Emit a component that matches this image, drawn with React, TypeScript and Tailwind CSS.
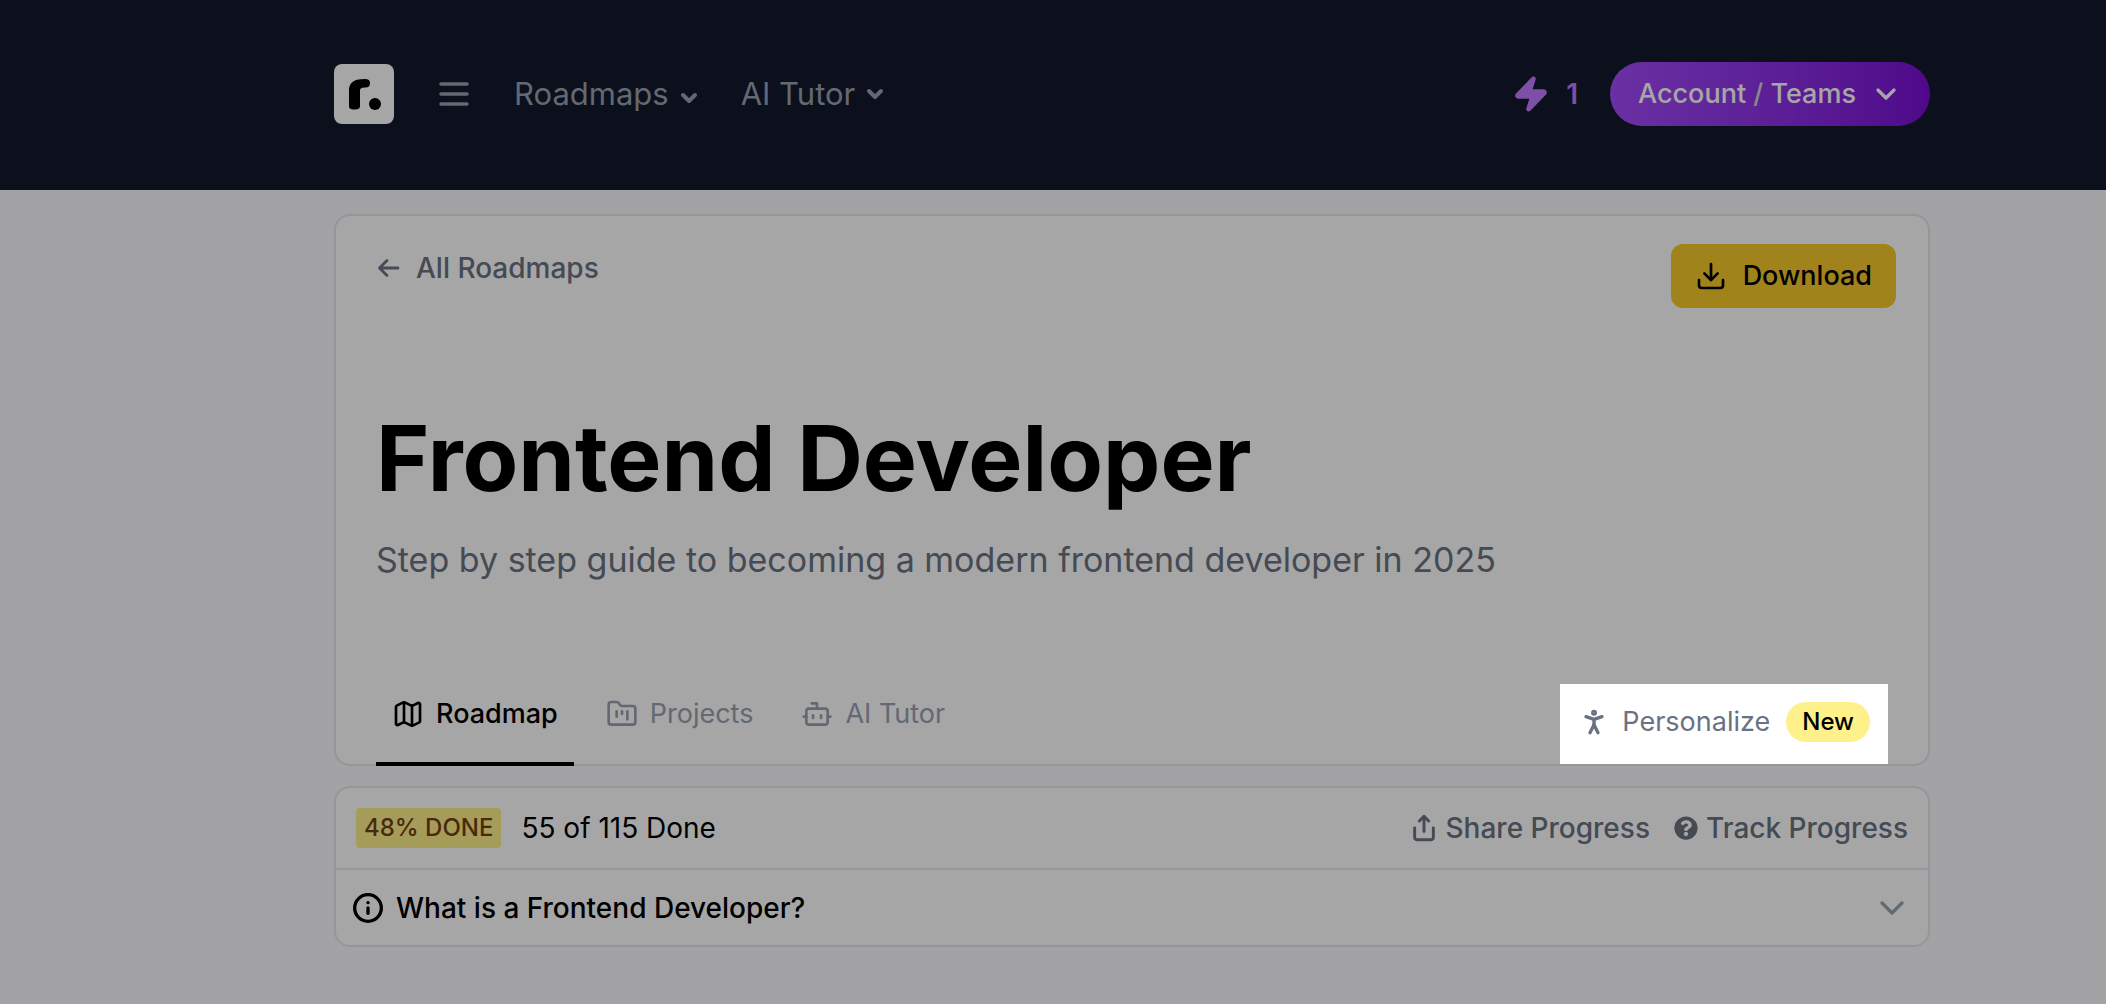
import React from 'react';
import {
  Bot,
  ChevronDown,
  Download,
  FolderKanban,
  Info,
  Map as MapIcon,
  PersonStanding,
  Share,
  Zap,
} from 'lucide-react';
import type { LucideIcon } from 'lucide-react';
import { FaQuestionCircle } from 'react-icons/fa';

const Logo: React.FC = () => (
  <svg viewBox="0 0 60 60" className="h-15 w-15" aria-hidden="true">
    <rect width="60" height="60" rx="8" fill="#fff" />
    <path
      d="M15 42V26C15 18 21 15 31 15C34.500 15 36 16.500 36 19C36 22 34.500 23.500 31.500 23.500C28 23.500 26 24 26 27V42C26 44.500 24.500 45.500 20.500 45.500C16.500 45.500 15 44.500 15 42Z"
      fill="#000"
    />
    <circle cx="41" cy="40" r="6" fill="#000" />
  </svg>
);

const MenuIcon: React.FC = () => (
  <svg viewBox="0 0 30 24" className="h-6 w-[30px]" fill="none" stroke="currentColor" strokeWidth="3.500" strokeLinecap="round">
    <path d="M2 2H28M2 12H28M2 22H28" />
  </svg>
);

const BackIcon: React.FC = () => (
  <svg viewBox="0 0 24 20" className="h-5 w-6" fill="none" stroke="currentColor" strokeWidth="2.800" strokeLinecap="round" strokeLinejoin="round">
    <path d="M22 10H3.500M11 2.500L3.500 10L11 17.500" />
  </svg>
);

interface TabProps {
  icon: LucideIcon;
  label: string;
  isActive?: boolean;
}

const Tab: React.FC<TabProps> = ({ icon: Icon, label, isActive }) => (
  <button
    type="button"
    className={`-mb-0.5 flex items-center gap-3 border-b-4 px-4 pb-7 text-[27px] leading-10 ${
      isActive ? 'border-black font-medium text-black' : 'border-transparent text-gray-400'
    }`}
  >
    <Icon className="h-8 w-8" />
    {label}
  </button>
);

const Header: React.FC = () => (
  <header className="bg-[#121a2b] pt-[62px] pr-[176px] pb-16 pl-[334px]">
    <div className="flex h-16 items-center justify-between">
      <nav className="flex items-center text-gray-400">
        <a href="#home" aria-label="Home">
          <Logo />
        </a>
        <button type="button" aria-label="Menu" className="ml-[45px]">
          <MenuIcon />
        </button>
        <button type="button" className="ml-[45px] flex items-center gap-2 text-[31px] leading-10">
          Roadmaps
          <ChevronDown className="mt-2 h-6 w-6" strokeWidth={4} />
        </button>
        <button type="button" className="ml-10 flex items-center gap-2 text-[31px] leading-10">
          AI Tutor
          <ChevronDown className="h-6 w-6" strokeWidth={4} />
        </button>
      </nav>

      <div className="flex items-center gap-8">
        <button type="button" className="flex items-center gap-4 text-[28px] font-semibold text-purple-400">
          <Zap className="h-[38px] w-[38px] fill-current" />
          1
        </button>
        <button
          type="button"
          className="flex h-16 w-80 items-center justify-between rounded-full bg-linear-to-r from-[#a44afc] to-[#7a0cd4] px-7 text-[27px] font-medium text-white"
        >
          <span>
            Account <span className="text-gray-300">/</span> Teams
          </span>
          <ChevronDown className="h-8 w-8" strokeWidth={2.5} />
        </button>
      </div>
    </div>
  </header>
);

// The spotlight's shadow dims everything on the page except the button itself
const PersonalizeButton: React.FC = () => (
  <button
    type="button"
    className="relative z-10 mr-2 flex h-20 items-center bg-white pr-[18px] pb-1 pl-[18px] text-[27px] text-gray-500 shadow-[0_0_0_4000px_rgba(0,0,0,0.35)]"
  >
    <PersonStanding className="h-8 w-8" strokeWidth={2.5} />
    <span className="ml-3">Personalize</span>
    <span className="ml-4 flex h-10 items-center rounded-full bg-[#fef08a] px-4 text-2xl font-medium text-black">
      New
    </span>
  </button>
);

const RoadmapHeader: React.FC = () => (
  <section className="rounded-2xl border-2 border-gray-200 bg-white pt-7 pr-8 pl-10">
    <div className="flex items-start justify-between">
      <a href="#roadmaps" className="mt-1 flex items-center gap-4 text-[28px] leading-10 font-medium text-gray-500">
        <BackIcon />
        All Roadmaps
      </a>
      <button
        type="button"
        className="flex h-16 items-center gap-4 rounded-xl bg-[#f8ca2a] px-6 text-[27px] font-medium text-black"
      >
        <Download className="h-8 w-8" />
        Download
      </button>
    </div>

    <h1 className="mt-[102px] text-[91px] leading-24 font-bold text-black">Frontend Developer</h1>
    <p className="mt-[34px] text-[34px] leading-10 text-gray-500">
      Step by step guide to becoming a modern frontend developer in 2025
    </p>

    <div className="mt-26 flex items-end justify-between">
      <div className="flex gap-4">
        <Tab icon={MapIcon} label="Roadmap" isActive />
        <Tab icon={FolderKanban} label="Projects" />
        <Tab icon={Bot} label="AI Tutor" />
      </div>
      <PersonalizeButton />
    </div>
  </section>
);

const ProgressPanel: React.FC = () => (
  <section className="mt-5 rounded-2xl border-2 border-gray-200 bg-white">
    <div className="flex h-[82px] items-center justify-between border-b-2 border-gray-200 px-5 text-[28px]">
      <p className="flex items-center gap-5 text-black">
        <span className="flex h-10 items-center rounded-sm bg-[#fef08a] px-2 text-2xl font-medium text-[#713f12]">
          48% DONE
        </span>
        55 of 115 Done
      </p>
      <div className="flex items-center gap-6 font-medium text-gray-500">
        <button type="button" className="flex items-center gap-2">
          <Share className="h-7 w-7" strokeWidth={2.5} />
          Share Progress
        </button>
        <button type="button" className="flex items-center gap-2">
          <FaQuestionCircle className="h-6 w-6" />
          Track Progress
        </button>
      </div>
    </div>
    <button
      type="button"
      className="flex h-[75px] w-full items-center gap-3 px-4 text-[28px] font-medium text-black"
    >
      <Info className="h-8 w-8" strokeWidth={2.5} />
      What is a Frontend Developer?
      <ChevronDown className="ml-auto h-10 w-10 text-gray-400" />
    </button>
  </section>
);

const App: React.FC = () => {
  return (
    <div className="min-h-screen overflow-hidden bg-[#fafafd] font-['Inter',sans-serif]">
      <Header />
      <main className="pt-6 pr-[176px] pb-14 pl-[334px]">
        <RoadmapHeader />
        <ProgressPanel />
      </main>
    </div>
  );
};

export default App;
